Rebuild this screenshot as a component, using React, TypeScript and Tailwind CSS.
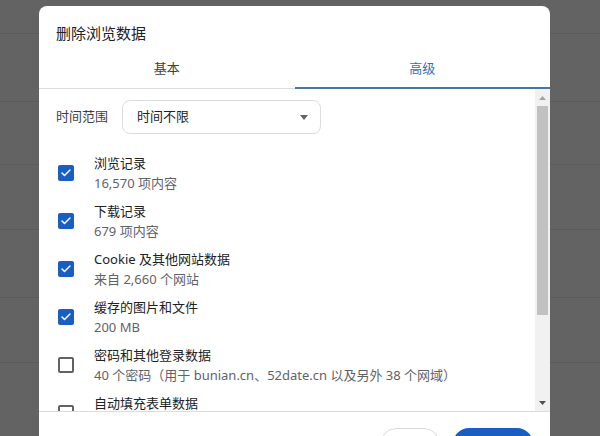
import { Check } from "lucide-react";

const items = [
  { title: "浏览记录", sub: "16,570 项内容", checked: true },
  { title: "下载记录", sub: "679 项内容", checked: true },
  { title: "Cookie 及其他网站数据", sub: "来自 2,660 个网站", checked: true },
  { title: "缓存的图片和文件", sub: "200 MB", checked: true },
  {
    title: "密码和其他登录数据",
    sub: "40 个密码（用于 bunian.cn、52date.cn 以及另外 38 个网域）",
    checked: false,
  },
  { title: "自动填充表单数据", sub: "", checked: false },
];

const font = {
  fontFamily: '"Noto Sans", "Noto Sans CJK SC", sans-serif',
};

function Checkbox({ checked }: { checked: boolean }) {
  if (checked) {
    return (
      <div className="ml-[2px] flex h-[16px] w-[16px] shrink-0 items-center justify-center rounded-[2px] bg-[#1b5ec2]">
        <Check className="h-[12px] w-[12px] text-white" strokeWidth={3} />
      </div>
    );
  }
  return (
    <div className="ml-[2px] h-[16px] w-[16px] shrink-0 rounded-[2px] border-2 border-[#5f6368]" />
  );
}

export default function App() {
  return (
    <div
      className="relative h-[436px] w-[600px] overflow-hidden bg-[#636363]"
      style={font}
    >
      {/* dimmed page behind the dialog */}
      <div className="absolute inset-0 flex flex-col">
        <div className="h-[34px] border-b border-[#5b5b5b]" />
        <div className="h-[68px] border-b border-[#5b5b5b]" />
        <div className="h-[63px] border-b border-[#5b5b5b]" />
        <div className="h-[65px] border-b border-[#5b5b5b]" />
        <div className="h-[68px] border-b border-[#5b5b5b]" />
        <div className="h-[65px] border-b border-[#5b5b5b]" />
      </div>

      <div className="relative pl-[39px] pt-[6px]">
        <div className="w-[511px] overflow-hidden rounded-t-[8px] bg-white">
          <div className="px-[17px] pt-[17px] text-[15px] leading-[20px] text-[#202124]">
            删除浏览数据
          </div>

          <div className="mt-[6px] flex text-[13px]">
            <div className="flex h-[40px] flex-1 items-center justify-center border-b border-[#dadce0] text-[#3c4043]">
              基本
            </div>
            <div className="flex h-[40px] flex-1 items-center justify-center border-b-2 border-[#4577a8] pt-[1px] text-[#3571b0]">
              高级
            </div>
          </div>

          <div className="flex h-[322px]">
            <div className="flex-1 overflow-hidden pl-[17px] pt-[11px] text-[13px]">
              <div className="flex items-center">
                <div className="w-[66px] text-[#3c4043]">时间范围</div>
                <div className="flex h-[34px] w-[199px] items-center justify-between rounded-[8px] border border-[#dadce0] pl-[14px] pr-[12px] text-[#202124]">
                  <span>时间不限</span>
                  <svg width="8" height="5" viewBox="0 0 8 5">
                    <path d="M0 0h8L4 5z" fill="#5f6368" />
                  </svg>
                </div>
              </div>

              <div className="mt-[15px] flex flex-col">
                {items.map((item) => (
                  <div key={item.title} className="flex h-[48px] shrink-0 items-center gap-[20px]">
                    <Checkbox checked={item.checked} />
                    <div className="flex flex-col leading-[20px]">
                      <div className="whitespace-nowrap text-[#202124]">{item.title}</div>
                      <div className="min-h-[20px] whitespace-nowrap text-[#5f6368]">{item.sub}</div>
                    </div>
                  </div>
                ))}
              </div>
            </div>

            <div className="flex w-[15px] flex-col bg-[#f1f1f1]">
              <div className="flex h-[17px] items-center justify-center">
                <svg width="7" height="4" viewBox="0 0 7 4">
                  <path d="M0 4h7L3.5 0z" fill="#a3a3a3" />
                </svg>
              </div>
              <div className="mx-[2px] h-[209px] bg-[#c1c1c1]" />
              <div className="flex-1" />
              <div className="flex h-[17px] items-center justify-center">
                <svg width="7" height="4" viewBox="0 0 7 4">
                  <path d="M0 0h7L3.5 4z" fill="#505050" />
                </svg>
              </div>
            </div>
          </div>

          <div className="flex justify-end gap-[13px] border-t border-[#dadce0] pb-[16px] pr-[17px] pt-[16px] text-[13px]">
            <button className="h-[32px] w-[60px] rounded-full border border-[#dadce0] text-[#1b5ec2]">
              取消
            </button>
            <button className="h-[32px] w-[80px] rounded-full bg-[#1b5ec2] text-white">
              删除数据
            </button>
          </div>
        </div>
      </div>
    </div>
  );
}
